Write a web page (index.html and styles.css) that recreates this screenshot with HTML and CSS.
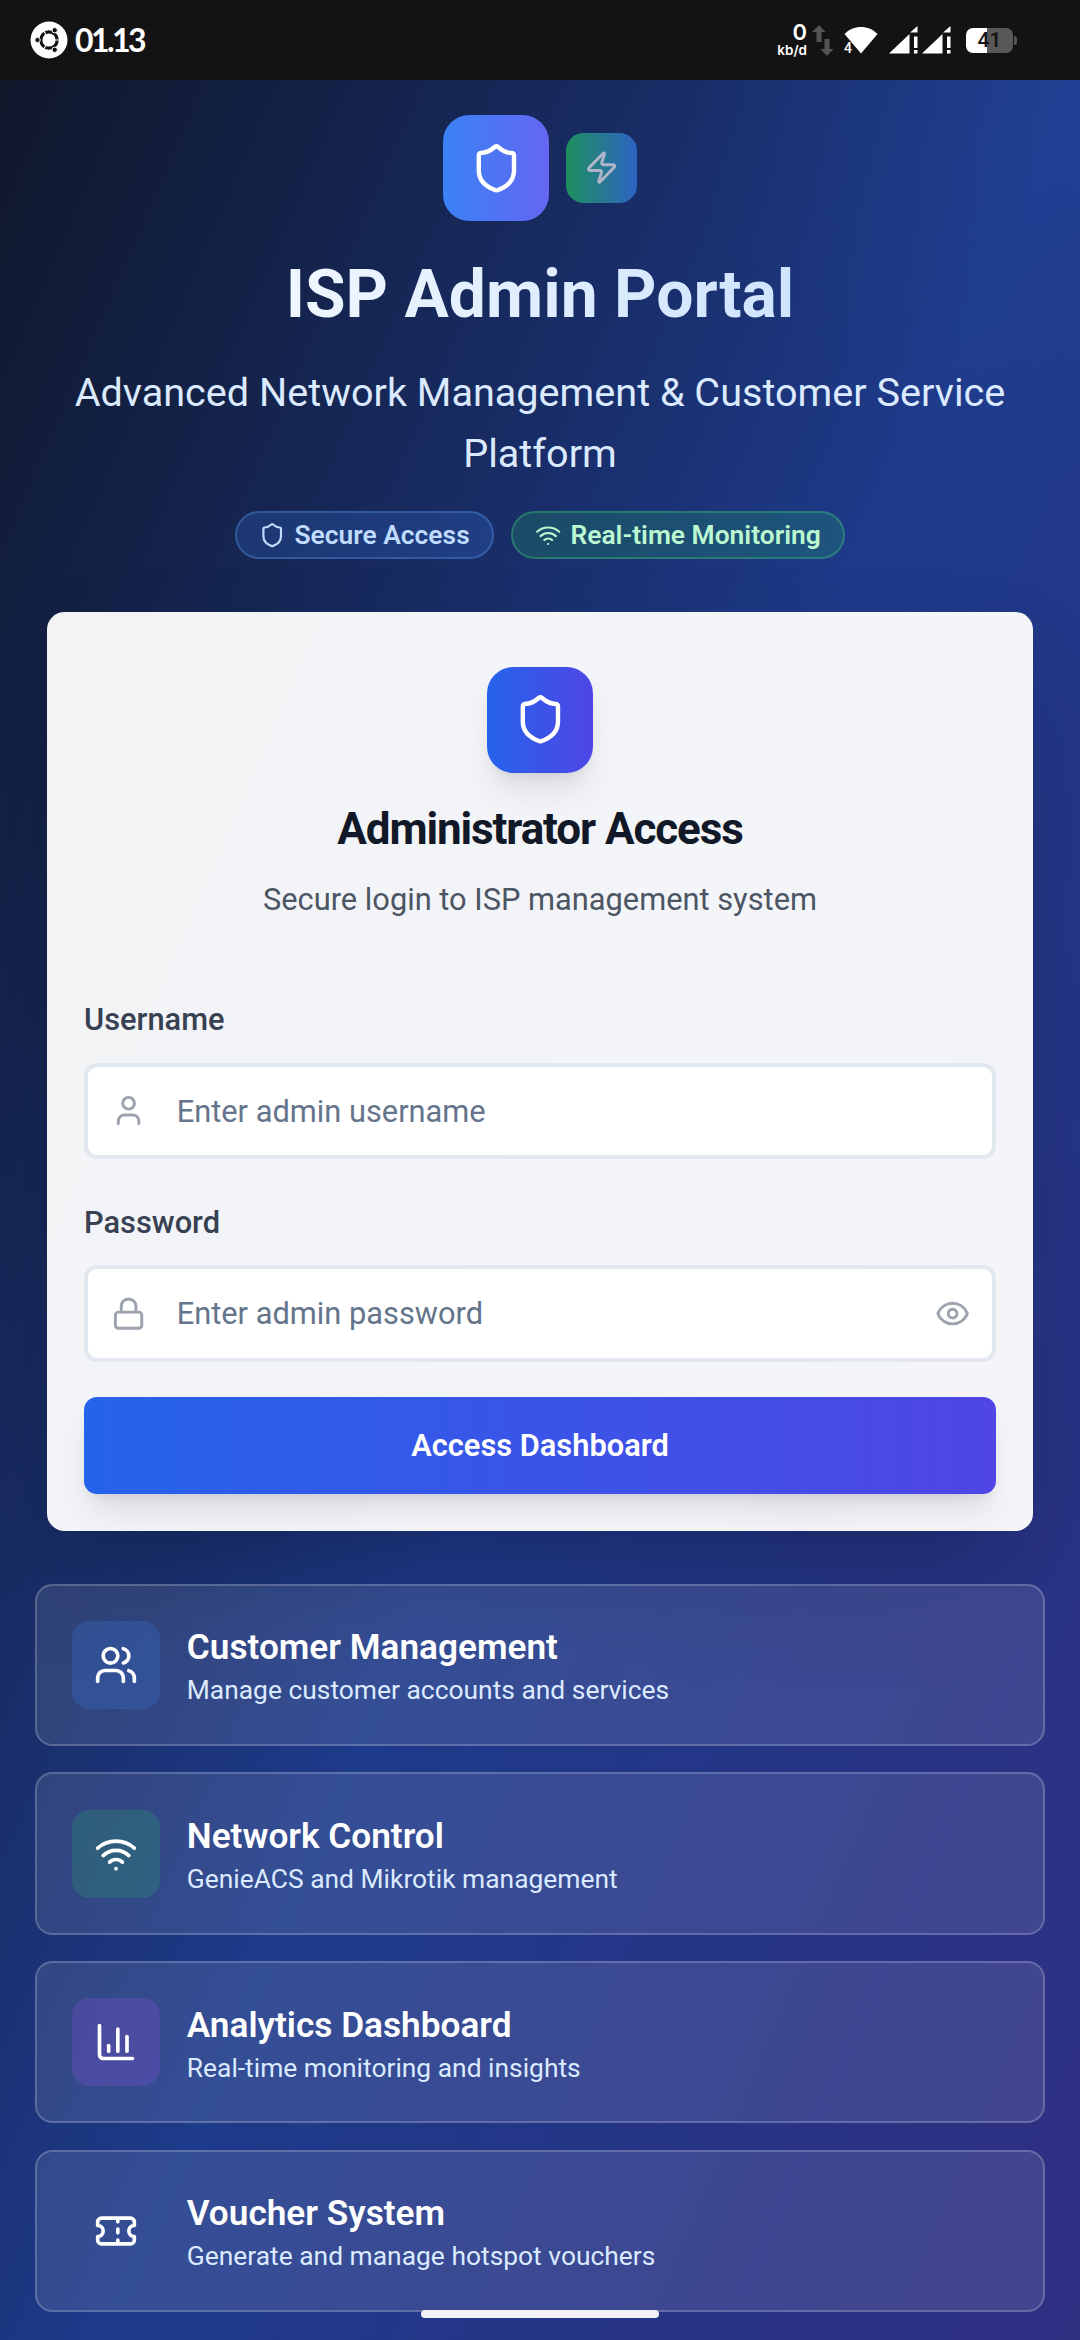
FILE: index.html
```html
<!DOCTYPE html>
<html lang="en">
<head>
<meta charset="utf-8">
<title>ISP Admin Portal</title>
<link rel="stylesheet" href="styles.css">
</head>
<body>
<svg class="sprite" aria-hidden="true">
  <symbol id="shield" viewBox="0 0 24 24"><path d="M20 13c0 5-3.5 7.5-7.66 8.95a1 1 0 0 1-.67-.01C7.5 20.5 4 18 4 13V6a1 1 0 0 1 1-1c2 0 4.5-1.2 6.24-2.72a1.17 1.17 0 0 1 1.52 0C14.51 3.81 17 5 19 5a1 1 0 0 1 1 1z"/></symbol>
  <symbol id="wifi" viewBox="0 0 24 24"><path d="M12 20h.01M2 8.82a15 15 0 0 1 20 0M5 12.859a10 10 0 0 1 14 0M8.5 16.429a5 5 0 0 1 7 0"/></symbol>
</svg>
<div class="screen">
  <header class="status">
    <svg class="distro" viewBox="0 0 38 38">
      <circle cx="19" cy="19" r="18.5" fill="#fff"/>
      <circle cx="19" cy="19" r="8.2" fill="none" stroke="#131313" stroke-width="3.2"/>
      <g stroke="#fff" stroke-width="1.2"><path d="M24 19h6M16.500 14.700l-3-5.200M16.500 23.300l-3 5.200"/></g>
      <g fill="#131313" stroke="#fff" stroke-width="1"><circle cx="7.500" cy="19" r="2.700"/><circle cx="24.700" cy="9.200" r="2.700"/><circle cx="24.700" cy="28.800" r="2.700"/></g>
    </svg>
    <span class="clock">01.13</span>
    <span class="rate"><b>0</b><span>kb/d</span></span>
    <svg class="arrows" viewBox="0 0 22 31"><g fill="#555"><path d="M7 0l6.500 7H9.500v10h-5V7H0z"/><path d="M15 31l6.500-7H17.500V14h-5v10H8.500z"/></g></svg>
    <span class="wlan">
      <svg viewBox="0 0 34 28"><path d="M0.500 8C9-1.500 25-1.500 33.500 8L17 27.500z" fill="#fff"/></svg>
      <i>4</i>
    </span>
    <svg class="signal" viewBox="0 0 29 28"><g fill="#fff"><path d="M0 27.500L20.500 8V27.500zM20.500 7L28.500 0V6.500H21z"/><path d="M25 10.500h3.500v11.500H25zM25 24h3.500v3.500H25z"/></g></svg>
    <svg class="signal second" viewBox="0 0 29 28"><g fill="#fff"><path d="M0 27.500L20.500 8V27.500zM20.500 7L28.500 0V6.500H21z"/><path d="M25 10.500h3.500v11.500H25zM25 24h3.500v3.500H25z"/></g></svg>
    <span class="battery">41</span>
  </header>

  <main class="page">
    <section class="hero">
      <div class="logos">
        <div class="tile brand"><svg class="ic i24"><use href="#shield"/></svg></div>
        <div class="tile bolt"><svg class="ic i16" viewBox="0 0 24 24"><path d="M4 14a1 1 0 0 1-.78-1.630l9.900-10.200a.5.5 0 0 1 .86.46l-1.920 6.020A1 1 0 0 0 13 10h7a1 1 0 0 1 .78 1.630l-9.900 10.200a.5.5 0 0 1-.86-.46l1.920-6.020A1 1 0 0 0 11 14z"/></svg></div>
      </div>
      <h1>ISP Admin Portal</h1>
      <p class="tagline">Advanced Network Management &amp; Customer Service Platform</p>
      <div class="badges">
        <span class="badge blue"><svg class="ic i12"><use href="#shield"/></svg>Secure Access</span>
        <span class="badge green"><svg class="ic i12"><use href="#wifi"/></svg>Real-time Monitoring</span>
      </div>
    </section>

    <form class="card">
      <div class="tile lock"><svg class="ic i24"><use href="#shield"/></svg></div>
      <h2>Administrator Access</h2>
      <p class="hint">Secure login to ISP management system</p>
      <label class="label" for="user">Username</label>
      <div class="field">
        <svg class="ic i16" viewBox="0 0 24 24"><path d="M19 21v-2a4 4 0 0 0-4-4H9a4 4 0 0 0-4 4v2"/><circle cx="12" cy="7" r="4"/></svg>
        <input id="user" type="text" placeholder="Enter admin username">
      </div>
      <label class="label next" for="pass">Password</label>
      <div class="field">
        <svg class="ic i16" viewBox="0 0 24 24"><rect x="3" y="11" width="18" height="11" rx="2"/><path d="M7 11V7a5 5 0 0 1 10 0v4"/></svg>
        <input id="pass" type="password" placeholder="Enter admin password">
        <svg class="ic i16" viewBox="0 0 24 24"><path d="M2.062 12.348a1 1 0 0 1 0-.696 10.750 10.750 0 0 1 19.876 0 1 1 0 0 1 0 .696 10.750 10.750 0 0 1-19.876 0"/><circle cx="12" cy="12" r="3"/></svg>
      </div>
      <button class="submit" type="button">Access Dashboard</button>
    </form>

    <section class="features">
      <article class="feature">
        <div class="chip c-blue"><svg class="ic i20" viewBox="0 0 24 24"><path d="M16 21v-2a4 4 0 0 0-4-4H6a4 4 0 0 0-4 4v2M22 21v-2a4 4 0 0 0-3-3.870M16 3.130a4 4 0 0 1 0 7.750"/><circle cx="9" cy="7" r="4"/></svg></div>
        <div><h3>Customer Management</h3><p>Manage customer accounts and services</p></div>
      </article>
      <article class="feature">
        <div class="chip c-green"><svg class="ic i20"><use href="#wifi"/></svg></div>
        <div><h3>Network Control</h3><p>GenieACS and Mikrotik management</p></div>
      </article>
      <article class="feature">
        <div class="chip c-purple"><svg class="ic i20" viewBox="0 0 24 24"><path d="M3 3v16a2 2 0 0 0 2 2h16M18 17V9M13 17V5M8 17v-3"/></svg></div>
        <div><h3>Analytics Dashboard</h3><p>Real-time monitoring and insights</p></div>
      </article>
      <article class="feature">
        <div class="chip"><svg class="ic i20" viewBox="0 0 24 24"><path d="M2 9a3 3 0 0 1 0 6v2a2 2 0 0 0 2 2h16a2 2 0 0 0 2-2v-2a3 3 0 0 1 0-6V7a2 2 0 0 0-2-2H4a2 2 0 0 0-2 2ZM13 5v2M13 17v2M13 11v2"/></svg></div>
        <div><h3>Voucher System</h3><p>Generate and manage hotspot vouchers</p></div>
      </article>
    </section>
  </main>
  <div class="home-bar"></div>
</div>
</body>
</html>
```
FILE: styles.css
```css
html { font-size: 35.2px; }
* { box-sizing: border-box; }
body { margin: 0; font-family: Roboto, sans-serif; }
h1, h2, h3, p { margin: 0; }

.screen { position: relative; width: 1080px; height: 2340px; overflow: hidden; }
.sprite { position: absolute; width: 0; height: 0; }

/* status bar */
.status {
  display: flex; align-items: center; height: 80px;
  padding-left: 30px; background: #131313; color: #fff;
}
.distro { width: 38px; height: 38px; }
.clock {
  width: 90px; margin-left: 7px;
  font: 700 32px/38px Lato, sans-serif; letter-spacing: -2.6px;
}
.rate {
  display: flex; flex-direction: column; align-items: flex-end;
  width: 40px; margin-left: 602px;
  font-family: Inter, sans-serif; font-size: 13.5px; font-weight: 600; line-height: 16px;
}
.rate b { font-size: 22px; line-height: 20px; font-weight: 600; }
.arrows { width: 22px; height: 31px; margin-left: 5px; }
.wlan { position: relative; width: 34px; height: 28px; margin-left: 10px; }
.wlan svg { display: block; width: 34px; height: 28px; }
.wlan i {
  position: absolute; left: 0; bottom: 0;
  font: 500 14px/11px Roboto, sans-serif; text-shadow: 0 0 2px #131313;
}
.signal { width: 29px; height: 28px; margin-left: 11px; }
.signal.second { margin-left: 4px; }
.battery {
  position: relative; width: 47px; height: 25px; margin-left: 15px;
  border-radius: 7px; background: linear-gradient(90deg, #fff 21px, #585858 21px);
  color: #131313; text-align: center;
  font: 500 21px/25px Roboto, sans-serif;
}
.battery::after {
  content: ""; position: absolute; left: 48px; top: 8px; width: 3px; height: 9px;
  border-radius: 0 3px 3px 0; background: #585858;
}

/* page */
.page {
  height: 2260px; padding: 1rem;
  background:
    radial-gradient(circle 400px at 1080px 20px, rgba(59,130,246,.09), rgba(59,130,246,0)),
    linear-gradient(to bottom right, #0f172a, #1e3a8a, #312e81) 0 0 / 100% 2500px;
}
.ic {
  flex: none; fill: none; stroke: currentColor; stroke-width: 2;
  stroke-linecap: round; stroke-linejoin: round;
}
.i12 { width: .75rem; height: .75rem; }
.i16 { width: 1rem; height: 1rem; }
.i20 { width: 1.25rem; height: 1.25rem; }
.i24 { width: 1.5rem; height: 1.5rem; }
.tile {
  display: flex; align-items: center; justify-content: center;
  width: 3rem; height: 3rem; border-radius: .75rem; color: #fff;
}
.hero { text-align: center; }
.logos { display: flex; align-items: center; justify-content: center; gap: .5rem; }
.brand { background: linear-gradient(90deg, #3b82f6, #6366f1); }
.bolt {
  width: 2rem; height: 2rem; border-radius: .5rem; opacity: .65;
  background: linear-gradient(90deg, #22c55e, #3b82f6);
}
h1 {
  margin: 34px 0 27.6px; font-size: 1.875rem; line-height: 2.25rem; font-weight: 700;
  color: transparent; background: linear-gradient(90deg, #fff, #bfdbfe);
  -webkit-background-clip: text; background-clip: text;
}
.tagline { font-size: 1.125rem; line-height: 1.75rem; color: #dbeafe; }
.badges { display: flex; justify-content: center; gap: .5rem; margin-top: .75rem; }
.badge {
  display: flex; align-items: center; gap: .25rem; padding: .125rem .625rem;
  border: 2px solid; border-radius: 99px;
  font-size: .75rem; line-height: 1rem; font-weight: 600;
}
.badge.blue { color: #bfdbfe; background: rgba(59,130,246,.2); border-color: rgba(96,165,250,.3); }
.badge.green { color: #bbf7d0; background: rgba(34,197,94,.2); border-color: rgba(74,222,128,.3); }

.card {
  width: 986px; height: 919px; margin: 1.5rem auto 0; padding: 55px 37px 37px;
  border-radius: .5rem; background: rgba(255,255,255,.95);
  box-shadow: 0 55px 110px -26px rgba(0,0,0,.25);
}
.lock {
  margin: 0 auto; background: linear-gradient(90deg, #2563eb, #4f46e5);
  box-shadow: 0 22px 33px -6.600px rgba(0,0,0,.1), 0 8.800px 13px -8.800px rgba(0,0,0,.1);
}
h2 {
  margin-top: 26px; text-align: center; color: #111827;
  font-size: 1.25rem; line-height: 1.75rem; font-weight: 700; letter-spacing: -.025em;
}
.hint {
  margin-top: 17.5px; text-align: center; color: #4b5563;
  font-size: .875rem; line-height: 1.25rem;
}
.label {
  display: block; margin: 76.5px 0 20.5px; color: #374151;
  font-size: .875rem; line-height: 1.25rem; font-weight: 500;
}
.label.next { margin: 41.5px 0 20.5px; }
.field {
  display: flex; align-items: center; gap: 31px; height: 96.8px; padding: 0 22px 0 22.5px;
  border: 4px solid #e2e8f0; border-radius: 13px; background: #fff; color: #9ca3af;
}
.field input {
  flex: 1; min-width: 0; padding: 1px 0 0; border: 0; background: none;
  font: 400 .875rem/1.25rem Roboto, sans-serif;
}
.field input::placeholder { color: #64748b; opacity: 1; }
.submit {
  display: block; width: 100%; height: 96.8px; margin-top: 35px; border: 0; border-radius: 13px;
  background: linear-gradient(90deg, #2563eb, #4f46e5); color: #fff;
  font: 600 .875rem/1.25rem Roboto, sans-serif;
  box-shadow: 0 22px 33px -6.600px rgba(0,0,0,.1), 0 8.800px 13px -8.800px rgba(0,0,0,.1);
}

.features { display: grid; gap: .75rem; margin-top: 1.5rem; }
.feature {
  display: flex; align-items: center; gap: .75rem; height: 162.300px; padding: 0 1rem;
  border: 2px solid rgba(255,255,255,.2); border-radius: .5rem;
  background: rgba(255,255,255,.1);
}
.chip {
  display: flex; align-items: center; justify-content: center;
  width: 2.5rem; height: 2.5rem; border-radius: .5rem; color: #fff;
}
.c-blue { background: rgba(59,130,246,.2); }
.c-green { background: rgba(34,197,94,.2); }
.c-purple { background: rgba(168,85,247,.2); }
h3 { font-size: 1rem; line-height: 1.5rem; font-weight: 600; color: #fff; }
.feature p { margin-top: -1px; font-size: .75rem; line-height: 1rem; color: #dbeafe; }

.home-bar {
  position: absolute; left: 421px; top: 2310px; width: 238px; height: 8px;
  border-radius: 4px; background: #f1f1f6;
}
```
